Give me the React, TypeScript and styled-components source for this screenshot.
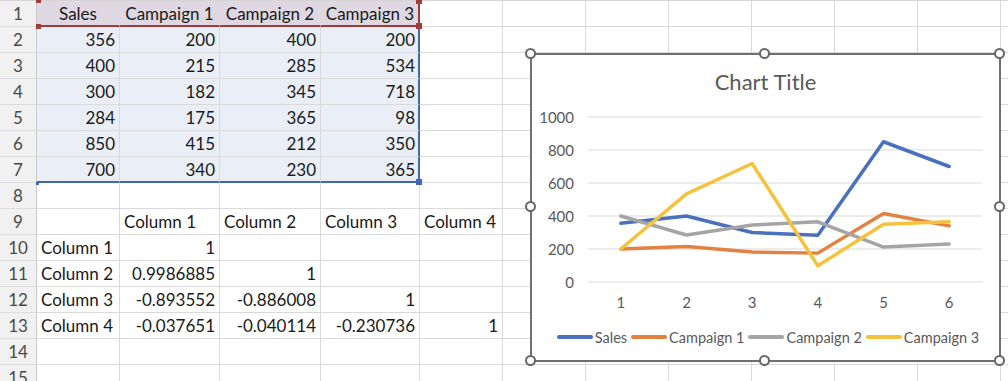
import React from "react";
import styled, { createGlobalStyle } from "styled-components";

const Global = createGlobalStyle`
  html, body { margin: 0; padding: 0; background: #fff; overflow: hidden; }
  body { font-family: Lato, "Liberation Sans", sans-serif; }
  #root { width: 1008px; height: 381px; overflow: hidden; }
`;

const COLS = [37, 83, 100, 101, 99, 83, 83, 83, 83, 83, 83, 83, 83];
const ROW_H = 26;
const RED = "#a33b3d";
const BLUE = "#4169b0";

const Page = styled.div`
  position: relative;
  width: 1008px;
  height: 381px;
  overflow: hidden;
  background: #fff;
`;

const Sheet = styled.div`
  display: grid;
  grid-template-columns: ${COLS.map((c) => c + "px").join(" ")};
  grid-auto-rows: ${ROW_H}px;
  border-top: 1px solid #d4d4d4;
  width: max-content;
`;

const RowHead = styled.div`
  background: #f1f1f1;
  border-right: 1px solid #c9c9c9;
  border-bottom: 1px solid #dcdcdc;
  color: #4a4a4a;
  font-size: 17px;
  display: flex;
  align-items: center;
  justify-content: center;
  box-sizing: border-box;
`;

type Align = "left" | "right" | "center";
type Fill = "none" | "head" | "data";

const fills: Record<Fill, string> = {
  none: "#ffffff",
  head: "#dfd7e1",
  data: "#e9eef7",
};

const Cell = styled.div<{ $align: Align; $fill: Fill; $rb?: string; $bb?: string }>`
  position: relative;
  box-sizing: border-box;
  background: ${(p) => fills[p.$fill]};
  border-right: ${(p) => (p.$rb ? `2px solid ${p.$rb}` : "1px solid #dadada")};
  border-bottom: ${(p) => (p.$bb ? `2px solid ${p.$bb}` : "1px solid #dadada")};
  color: #1a1a1a;
  font-size: 17px;
  display: flex;
  align-items: center;
  justify-content: ${(p) =>
    p.$align === "left" ? "flex-start" : p.$align === "right" ? "flex-end" : "center"};
  padding: 0 ${(p) => (p.$rb ? 3 : 4)}px 0 4px;
  white-space: nowrap;
`;

type Corner = "tl" | "bl" | "tr" | "br";

const RangeHandle = styled.span<{ $color: string; $corner: Corner; $s: number }>`
  position: absolute;
  z-index: 3;
  width: ${(p) => p.$s}px;
  height: ${(p) => p.$s}px;
  background: ${(p) => p.$color};
  ${(p) => (p.$corner[0] === "t" ? "top: -3px;" : "bottom: -4px;")}
  ${(p) => (p.$corner[1] === "l" ? "left: -1px;" : "right: -4px;")}
`;

/* ---------- Chart ---------- */

const ChartFrame = styled.div`
  position: absolute;
  z-index: 5;
  left: 530px;
  top: 53px;
  width: 471px;
  height: 309px;
  box-sizing: border-box;
  border: 2px solid #6f6f6f;
  background: #fff;
  display: flex;
  flex-direction: column;
  align-items: stretch;
`;

const ChartTitle = styled.div`
  padding-top: 14px;
  height: 26px;
  line-height: 26px;
  text-align: center;
  font-size: 22px;
  color: #595959;
`;

const PlotSvg = styled.svg`
  display: block;
  width: 467px;
  height: 225px;
`;

const Legend = styled.div`
  margin-top: 7px;
  display: flex;
  justify-content: center;
  align-items: center;
  gap: 4px;
  height: 20px;
  padding-left: 5px;
`;

const LegendItem = styled.div`
  display: flex;
  align-items: center;
  gap: 2px;
  font-size: 14.5px;
  color: #595959;
`;

const Swatch = styled.span<{ $color: string }>`
  display: inline-block;
  width: 36px;
  height: 4px;
  border-radius: 2px;
  background: ${(p) => p.$color};
`;

const FrameHandle = styled.div<{ $x: string; $y: string }>`
  position: absolute;
  left: ${(p) => p.$x};
  top: ${(p) => p.$y};
  width: 11px;
  height: 11px;
  margin-left: -6.5px;
  margin-top: -6.5px;
  box-sizing: border-box;
  border: 2px solid #666;
  border-radius: 50%;
  background: #fff;
`;

const series = [
  { name: "Sales", color: "#4a70be", values: [356, 400, 300, 284, 850, 700] },
  { name: "Campaign 1", color: "#e3813f", values: [200, 215, 182, 175, 415, 340] },
  { name: "Campaign 2", color: "#a5a5a5", values: [400, 285, 345, 365, 212, 230] },
  { name: "Campaign 3", color: "#f4c23c", values: [200, 534, 718, 98, 350, 365] },
];

const PX0 = 56;
const PX1 = 450;
const PY_TOP = 22;
const PY_ZERO = 187;
const catW = (PX1 - PX0) / 6;
const xAt = (i: number) => PX0 + catW / 2 + i * catW;
const yAt = (v: number) => PY_ZERO - (v / 1000) * (PY_ZERO - PY_TOP);
const FONT = "Lato, 'Liberation Sans', sans-serif";

function Chart() {
  const ticks = [0, 200, 400, 600, 800, 1000];
  const handles: [string, string][] = [
    ["-1px", "-1px"],
    ["50%", "-1px"],
    ["calc(100% + 1px)", "-1px"],
    ["-1px", "50%"],
    ["calc(100% + 1px)", "50%"],
    ["-1px", "calc(100% + 1px)"],
    ["50%", "calc(100% + 1px)"],
    ["calc(100% + 1px)", "calc(100% + 1px)"],
  ];
  return (
    <ChartFrame>
      <ChartTitle>Chart Title</ChartTitle>
      <PlotSvg viewBox="0 0 467 225">
        {ticks.map((tk) => (
          <g key={tk}>
            <line x1={PX0} x2={PX1} y1={yAt(tk)} y2={yAt(tk)} stroke="#d9d9d9" strokeWidth={1} />
            <text
              x={42}
              y={yAt(tk)}
              textAnchor="end"
              dominantBaseline="central"
              fontSize={15}
              fill="#595959"
              fontFamily={FONT}
            >
              {tk}
            </text>
          </g>
        ))}
        {[1, 2, 3, 4, 5, 6].map((num, i) => (
          <text
            key={num}
            x={xAt(i)}
            y={207}
            textAnchor="middle"
            dominantBaseline="central"
            fontSize={15}
            fill="#595959"
            fontFamily={FONT}
          >
            {num}
          </text>
        ))}
        {series.map((s) => (
          <polyline
            key={s.name}
            points={s.values.map((v, i) => `${xAt(i)},${yAt(v)}`).join(" ")}
            fill="none"
            stroke={s.color}
            strokeWidth={3.5}
            strokeLinejoin="round"
            strokeLinecap="round"
          />
        ))}
      </PlotSvg>
      <Legend>
        {series.map((s) => (
          <LegendItem key={s.name}>
            <Swatch $color={s.color} />
            {s.name}
          </LegendItem>
        ))}
      </Legend>
      {handles.map(([x, y], i) => (
        <FrameHandle key={i} $x={x} $y={y} />
      ))}
    </ChartFrame>
  );
}

type HandleDef = { color: string; corner: Corner; s: number };
type CellDef = { v: string; a: Align; f: Fill; rb?: string; bb?: string; hs?: HandleDef[] };

const t = (v: string): CellDef => ({ v, a: "left", f: "none" });
const n = (v: string): CellDef => ({ v, a: "right", f: "none" });
const e: CellDef = { v: "", a: "left", f: "none" };
const h = (v: string, extra: Partial<CellDef> = {}): CellDef => ({ v, a: "center", f: "head", bb: RED, ...extra });
const d = (v: string, extra: Partial<CellDef> = {}): CellDef => ({ v, a: "right", f: "data", ...extra });

const dr = (vals: string[], last = false): CellDef[] =>
  vals.map((v, i) =>
    d(v, {
      rb: i === 3 ? BLUE : undefined,
      bb: last ? BLUE : undefined,
      hs:
        last && i === 0
          ? [{ color: BLUE, corner: "bl", s: 3 }]
          : last && i === 3
          ? [{ color: BLUE, corner: "br", s: 6 }]
          : undefined,
    })
  );

const TOTAL_COLS = COLS.length - 1;

const rows: CellDef[][] = [
  [
    h("Sales", {
      hs: [
        { color: RED, corner: "tl", s: 5 },
        { color: RED, corner: "bl", s: 5 },
      ],
    }),
    h("Campaign 1"),
    h("Campaign 2"),
    h("Campaign 3", {
      rb: RED,
      hs: [
        { color: RED, corner: "tr", s: 6 },
        { color: RED, corner: "br", s: 6 },
      ],
    }),
  ],
  dr(["356", "200", "400", "200"]),
  dr(["400", "215", "285", "534"]),
  dr(["300", "182", "345", "718"]),
  dr(["284", "175", "365", "98"]),
  dr(["850", "415", "212", "350"]),
  dr(["700", "340", "230", "365"], true),
  [],
  [e, t("Column 1"), t("Column 2"), t("Column 3"), t("Column 4")],
  [t("Column 1"), n("1")],
  [t("Column 2"), n("0.9986885"), n("1")],
  [t("Column 3"), n("-0.893552"), n("-0.886008"), n("1")],
  [t("Column 4"), n("-0.037651"), n("-0.040114"), n("-0.230736"), n("1")],
  [],
  [],
];

export default function App() {
  return (
    <Page>
      <Global />
      <Sheet>
        {rows.map((r, ri) => (
          <React.Fragment key={ri}>
            <RowHead>{ri + 1}</RowHead>
            {Array.from({ length: TOTAL_COLS }).map((_, ci) => {
              const c = r[ci] ?? e;
              return (
                <Cell key={ci} $align={c.a} $fill={c.f} $rb={c.rb} $bb={c.bb}>
                  {c.v}
                  {c.hs?.map((hd, k) => (
                    <RangeHandle key={k} $color={hd.color} $corner={hd.corner} $s={hd.s} />
                  ))}
                </Cell>
              );
            })}
          </React.Fragment>
        ))}
      </Sheet>
      <Chart />
    </Page>
  );
}
